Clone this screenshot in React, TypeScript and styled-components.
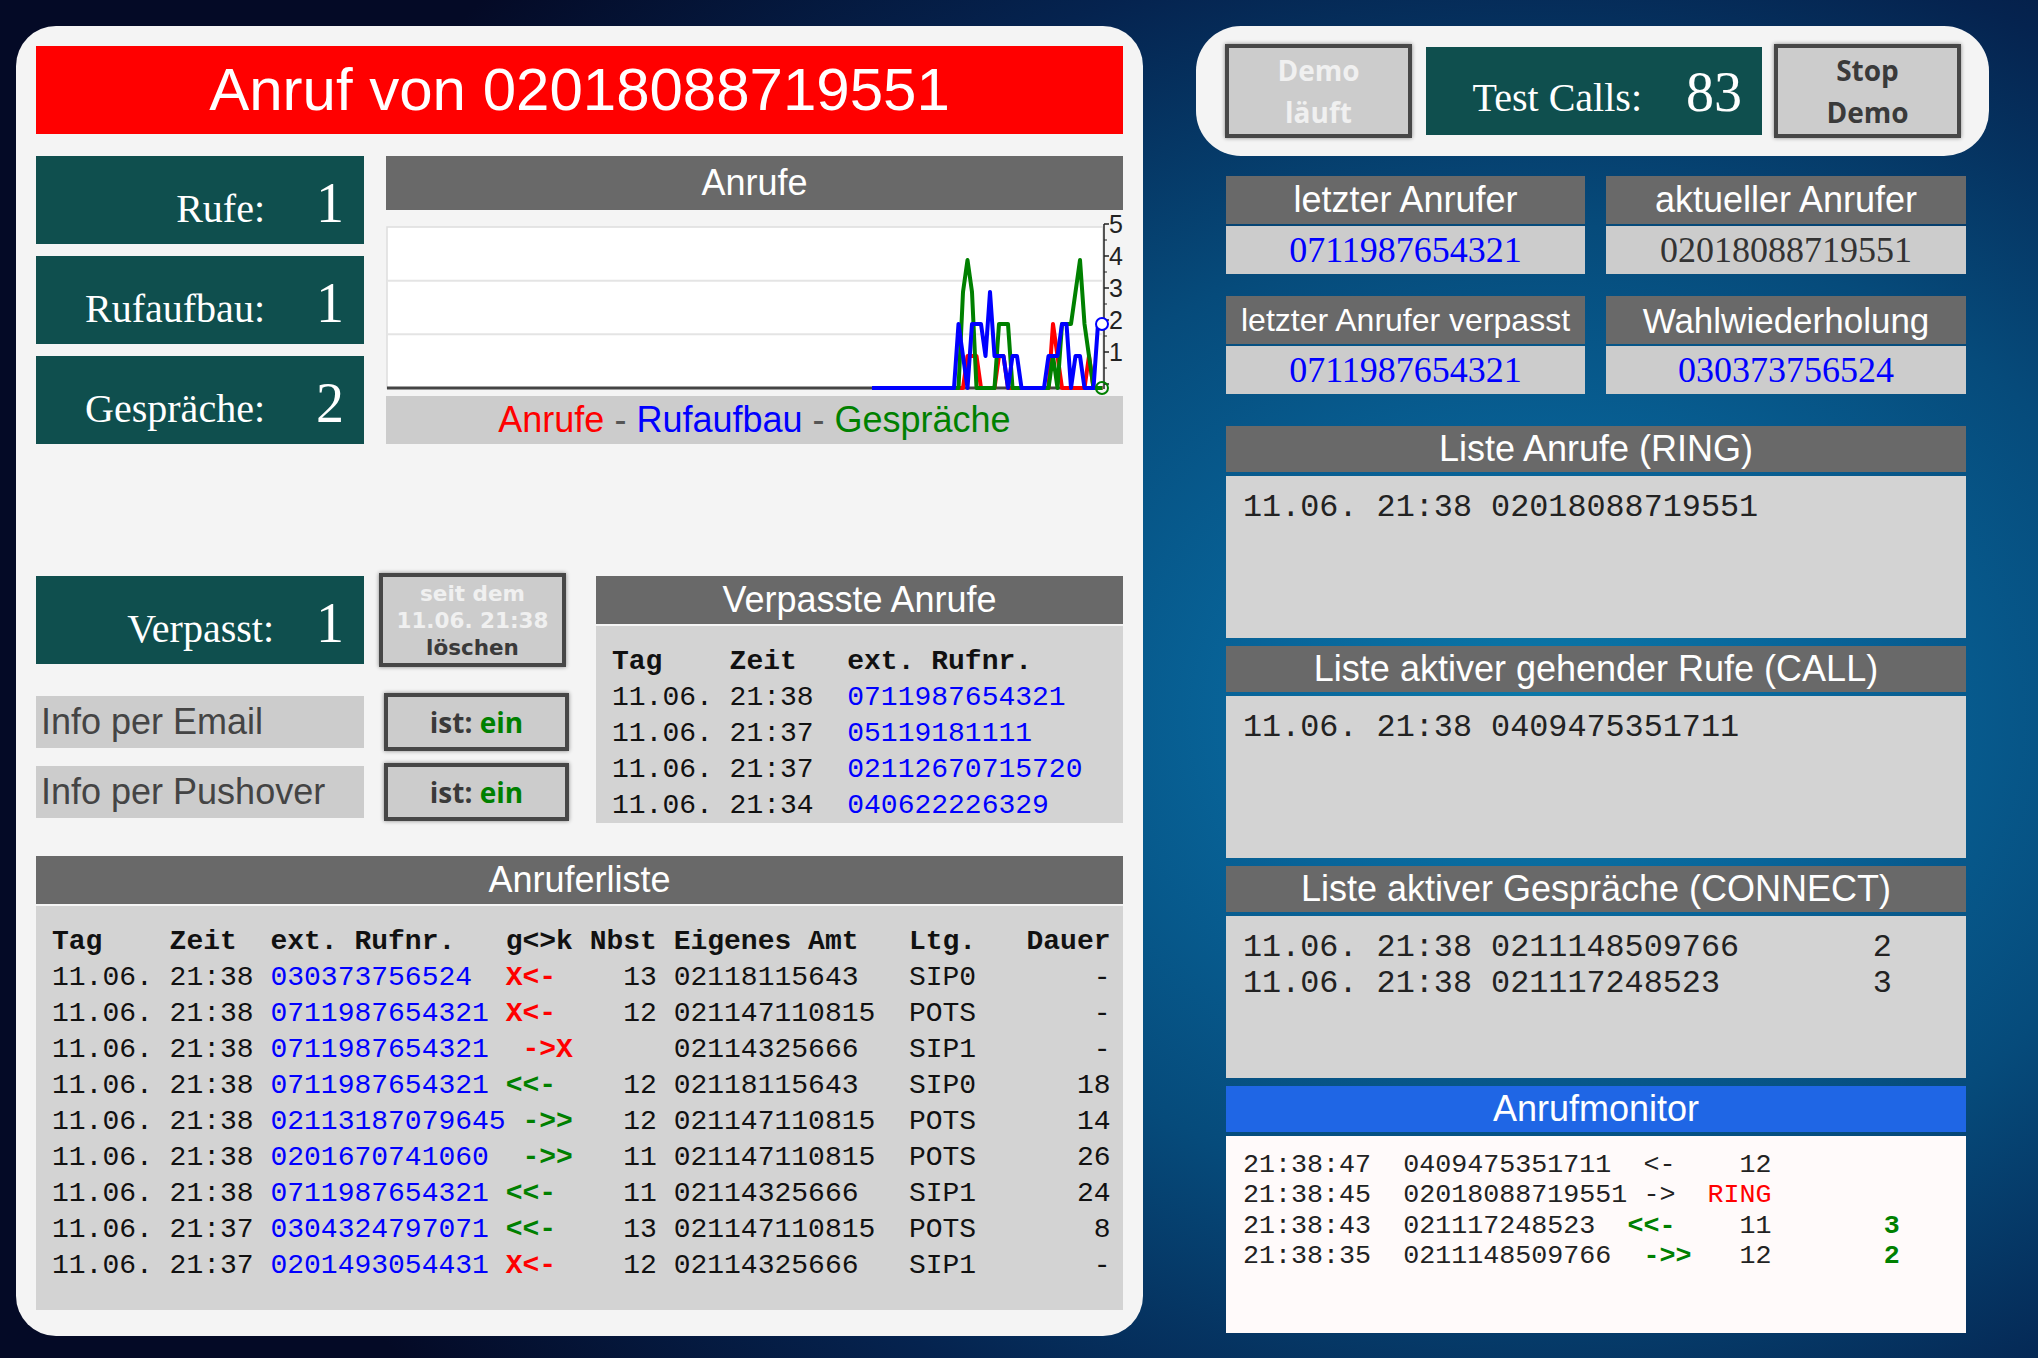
import React from 'react';
import styled, { createGlobalStyle } from 'styled-components';

const SANS = '"Liberation Sans", Arial, sans-serif';
const SERIF = '"Liberation Serif", "Times New Roman", serif';
const MONO = '"Liberation Mono", "Courier New", monospace';
const BTN = '"Open Sans", "DejaVu Sans", sans-serif';
const BTN_TIGHT = '"DejaVu Sans", Verdana, sans-serif';

const GlobalStyle = createGlobalStyle`
  html, body { margin: 0; padding: 0; }
  body {
    width: 2038px;
    height: 1358px;
    overflow: hidden;
    background: radial-gradient(ellipse 1400px 1100px at 1540px 720px, #0b7aaa 0%, #08659a 20%, #064b7b 45%, #05234f 72%, #040a26 100%);
    font-family: ${SANS};
  }
`;

const Page = styled.div`
  display: flex;
  align-items: flex-start;
  gap: 53px;
  padding: 26px 0 0 16px;
`;

const LeftPanel = styled.div`
  width: 1127px;
  box-sizing: border-box;
  padding: 20px 20px 26px;
  background: #f4f4f4;
  border-radius: 40px;
  display: flex;
  flex-direction: column;
`;

const TitleBar = styled.div`
  height: 88px;
  background: #ff0000;
  color: #fff;
  font: 60px/1 ${SANS};
  display: flex;
  align-items: center;
  justify-content: center;
`;

const TopRow = styled.div`
  margin-top: 22px;
  display: grid;
  grid-template-columns: 328px 737px;
  column-gap: 22px;
`;

const StatStack = styled.div`
  display: flex;
  flex-direction: column;
  gap: 12px;
`;

const StatBox = styled.div<{ $w?: number; $pt: number; $ml?: number }>`
  width: ${(p) => (p.$w ? `${p.$w}px` : '328px')};
  height: 88px;
  margin-left: ${(p) => p.$ml || 0}px;
  box-sizing: border-box;
  flex-shrink: 0;
  background: #0f4f4e;
  color: #fff;
  font-family: ${SERIF};
  display: flex;
  justify-content: flex-end;
  align-items: baseline;
  padding: ${(p) => p.$pt}px 20px 0 0;
`;

const StatLabel = styled.span`
  font-size: 40px;
  line-height: 1;
`;

const StatValue = styled.span<{ $w: number }>`
  font-size: 56px;
  line-height: 1;
  width: ${(p) => p.$w}px;
  text-align: right;
`;

const Column = styled.div`
  display: flex;
  flex-direction: column;
`;

const SectionHeader = styled.div<{ $h: number; $bg?: string; $fs?: number }>`
  height: ${(p) => p.$h}px;
  flex-shrink: 0;
  background: ${(p) => p.$bg || '#696969'};
  color: #fff;
  font-family: ${SANS};
  font-size: ${(p) => p.$fs || 36}px;
  line-height: 1;
  display: flex;
  align-items: center;
  justify-content: center;
  white-space: nowrap;
`;

const ChartArea = styled.div`
  height: 186px;
  svg { display: block; overflow: visible; }
`;

const Legend = styled.div`
  height: 48px;
  background: #cccccc;
  color: #555;
  font: 36px/1 ${SANS};
  display: flex;
  align-items: center;
  justify-content: center;
  white-space: pre;
`;

const LegendItem = styled.span<{ $c: string }>`
  color: ${(p) => p.$c};
`;

const MiddleRow = styled.div`
  margin-top: 132px;
  display: flex;
`;

const ControlColumn = styled.div`
  width: 560px;
  display: flex;
  flex-direction: column;
`;

const ControlRow = styled.div<{ $h: number; $mt?: number }>`
  height: ${(p) => p.$h}px;
  margin-top: ${(p) => p.$mt || 0}px;
  display: flex;
  align-items: center;
`;

const InfoBar = styled.div`
  width: 328px;
  height: 52px;
  flex-shrink: 0;
  box-sizing: border-box;
  padding-left: 5px;
  background: #cccccc;
  color: #444;
  font: 36px/1 ${SANS};
  display: flex;
  align-items: center;
`;

const ActionButton = styled.button<{ $w: number; $h: number; $ml?: number; $fs: number; $lh: number; $font?: string }>`
  width: ${(p) => p.$w}px;
  height: ${(p) => p.$h}px;
  margin-left: ${(p) => p.$ml || 0}px;
  flex-shrink: 0;
  box-sizing: border-box;
  padding: 0;
  background: #cccccc;
  border: 4px solid #474747;
  box-shadow: 0 0 4px rgba(0, 0, 0, 0.45);
  font-family: ${(p) => p.$font || BTN};
  font-weight: 700;
  font-size: ${(p) => p.$fs}px;
  line-height: ${(p) => p.$lh}px;
  color: #3a3a3a;
  display: flex;
  flex-direction: column;
  align-items: center;
  justify-content: center;
  cursor: pointer;
`;

const BtnLine = styled.span<{ $light?: boolean }>`
  display: block;
  white-space: nowrap;
  color: ${(p) => (p.$light ? '#f0f0f0' : '#3a3a3a')};
`;

const Green = styled.span`
  color: #008000;
`;

const TableSection = styled.div<{ $w?: number; $mt?: number }>`
  width: ${(p) => (p.$w ? `${p.$w}px` : 'auto')};
  margin-top: ${(p) => p.$mt || 0}px;
  display: flex;
  flex-direction: column;
  gap: 2px;
`;

const DataBody = styled.div<{ $h: number; $pad: string }>`
  height: ${(p) => p.$h}px;
  box-sizing: border-box;
  padding: ${(p) => p.$pad};
  overflow: hidden;
  background: #d3d3d3;
  color: #111;
  font-family: ${MONO};
  font-size: 28px;
  line-height: 36px;
`;

const GridRow = styled.div<{ $cols: string; $bold?: boolean }>`
  display: grid;
  grid-template-columns: ${(p) => p.$cols};
  white-space: pre;
  font-weight: ${(p) => (p.$bold ? 700 : 400)};
`;

const Cell = styled.span<{ $right?: boolean; $pl?: number }>`
  text-align: ${(p) => (p.$right ? 'right' : 'left')};
  padding-left: ${(p) => (p.$pl ? `${p.$pl}ch` : '0')};
`;

const NumCell = styled(Cell)`
  color: #0000ff;
`;

const ArrowCell = styled(Cell)<{ $c: string }>`
  color: ${(p) => p.$c};
  font-weight: 700;
`;

const RightCol = styled.div`
  width: 793px;
  display: flex;
  flex-direction: column;
`;

const Pill = styled.div`
  height: 130px;
  box-sizing: border-box;
  padding-left: 29px;
  background: #f4f4f4;
  border-radius: 45px;
  display: flex;
  align-items: center;
`;

const CardGrid = styled.div`
  margin: 20px 0 0 30px;
  width: 740px;
  display: grid;
  grid-template-columns: 359px 360px;
  column-gap: 21px;
  row-gap: 22px;
`;

const Card = styled.div`
  display: flex;
  flex-direction: column;
  gap: 2px;
`;

const CardValue = styled.div<{ $c: string }>`
  height: 48px;
  background: #cccccc;
  color: ${(p) => p.$c};
  font: 36px/1 ${SERIF};
  display: flex;
  align-items: center;
  justify-content: center;
`;

const ListSection = styled.div<{ $mt: number }>`
  margin: ${(p) => p.$mt}px 0 0 30px;
  width: 740px;
  display: flex;
  flex-direction: column;
  gap: 4px;
`;

const ListBody = styled.div`
  height: 162px;
  box-sizing: border-box;
  padding: 14px 17px;
  background: #d3d3d3;
  color: #222;
  font-family: ${MONO};
  font-size: 31.8px;
  line-height: 36px;
  white-space: pre;
`;

const MonitorBody = styled.div`
  height: 197px;
  box-sizing: border-box;
  padding: 14px 17px;
  background: #fffafa;
  color: #222;
  font-family: ${MONO};
  font-size: 26.7px;
  line-height: 30.3px;
  white-space: pre;
`;

const MonLine = styled.div``;

const Red = styled.span`
  color: #ff0000;
`;

const GreenBold = styled.span`
  color: #008000;
  font-weight: 700;
`;

/* ---------- chart ---------- */
const PX0 = 568;
const STEP = 4.5;
const yv = (v: number) => 178 - 32 * v;
const blue = [0, 2, 1, 0, 2, 2, 2, 1, 3, 1, 1, 1, 0, 1, 1, 0, 0, 0, 0, 0, 0, 1, 1, 1, 2, 2, 0, 1, 1, 0, 0, 0, 2, 2];
const green = [0, 0, 3, 4, 3, 0, 0, 0, 0, 0, 2, 2, 2, 0, 0, 0, 0, 0, 0, 0, 0, 0, 1, 0, 2, 2, 2, 3, 4, 2, 1, 0, 0, 0];
const red = [0, 0, 0, 1, 1, 1, 0, 0, 0, 0, 1, 1, 0, 0, 0, 0, 0, 0, 0, 0, 0, 0, 2, 1, 0, 0, 0, 0, 0, 0, 1, 0, 0, 0];

const seriesPath = (vals: number[], startX?: number) => {
  let d = startX !== undefined ? `M${startX},178 L${PX0},${yv(vals[0])}` : `M${PX0},${yv(vals[0])}`;
  vals.forEach((v, i) => {
    if (i > 0) d += ` L${(PX0 + i * STEP).toFixed(1)},${yv(v)}`;
  });
  return d;
};

const Chart = () => (
  <svg width="737" height="186" viewBox="0 0 737 186">
    <rect x="1" y="17" width="716" height="161" fill="#ffffff" stroke="#dddddd" strokeWidth="1.5" />
    <line x1="1" y1="70.7" x2="716" y2="70.7" stroke="#e4e4e4" strokeWidth="2" />
    <line x1="1" y1="124.3" x2="716" y2="124.3" stroke="#e4e4e4" strokeWidth="2" />
    <line x1="1" y1="178" x2="716" y2="178" stroke="#444" strokeWidth="3" />
    <line x1="718" y1="14" x2="718" y2="179" stroke="#222" strokeWidth="1.5" />
    {[0, 1, 2, 3, 4, 5].map((v) => (
      <line key={`t${v}`} x1="718" y1={yv(v) - 4} x2="723" y2={yv(v) - 4} stroke="#222" strokeWidth="1.5" />
    ))}
    {[0.5, 1.5, 2.5, 3.5, 4.5].map((v) => (
      <line key={`m${v}`} x1="718" y1={yv(v) - 4} x2="721" y2={yv(v) - 4} stroke="#222" strokeWidth="1" />
    ))}
    {[1, 2, 3, 4, 5].map((v) => (
      <text key={`l${v}`} x="723" y={yv(v) + 5} fontFamily={SANS} fontSize="25" fill="#222">
        {v}
      </text>
    ))}
    <path d={seriesPath(red)} fill="none" stroke="#ff0000" strokeWidth="4" strokeLinejoin="round" />
    <path d={seriesPath(green)} fill="none" stroke="#008000" strokeWidth="4" strokeLinejoin="round" />
    <path d={seriesPath(blue, 486)} fill="none" stroke="#0000ff" strokeWidth="4" strokeLinejoin="round" />
    <circle cx="716" cy={yv(2)} r="6" fill="#fff" stroke="#0000ff" strokeWidth="2" />
    <circle cx="716" cy="178" r="6" fill="none" stroke="#008000" strokeWidth="2" />
  </svg>
);

/* ---------- data ---------- */
type Dir = 'missIn' | 'missOut' | 'in' | 'out';
const arrowText: Record<Dir, string> = { missIn: 'X<-', missOut: ' ->X', in: '<<-', out: ' ->>' };
const arrowColor: Record<Dir, string> = { missIn: '#ff0000', missOut: '#ff0000', in: '#008000', out: '#008000' };

const calls: { day: string; time: string; nr: string; dir: Dir; nbst: string; own: string; ltg: string; dur: string }[] = [
  { day: '11.06.', time: '21:38', nr: '030373756524', dir: 'missIn', nbst: '13', own: '02118115643', ltg: 'SIP0', dur: '-' },
  { day: '11.06.', time: '21:38', nr: '0711987654321', dir: 'missIn', nbst: '12', own: '021147110815', ltg: 'POTS', dur: '-' },
  { day: '11.06.', time: '21:38', nr: '0711987654321', dir: 'missOut', nbst: '', own: '02114325666', ltg: 'SIP1', dur: '-' },
  { day: '11.06.', time: '21:38', nr: '0711987654321', dir: 'in', nbst: '12', own: '02118115643', ltg: 'SIP0', dur: '18' },
  { day: '11.06.', time: '21:38', nr: '02113187079645', dir: 'out', nbst: '12', own: '021147110815', ltg: 'POTS', dur: '14' },
  { day: '11.06.', time: '21:38', nr: '0201670741060', dir: 'out', nbst: '11', own: '021147110815', ltg: 'POTS', dur: '26' },
  { day: '11.06.', time: '21:38', nr: '0711987654321', dir: 'in', nbst: '11', own: '02114325666', ltg: 'SIP1', dur: '24' },
  { day: '11.06.', time: '21:37', nr: '0304324797071', dir: 'in', nbst: '13', own: '021147110815', ltg: 'POTS', dur: '8' },
  { day: '11.06.', time: '21:37', nr: '0201493054431', dir: 'missIn', nbst: '12', own: '02114325666', ltg: 'SIP1', dur: '-' },
];

const missed = [
  { day: '11.06.', time: '21:38', nr: '0711987654321' },
  { day: '11.06.', time: '21:37', nr: '05119181111' },
  { day: '11.06.', time: '21:37', nr: '02112670715720' },
  { day: '11.06.', time: '21:34', nr: '040622226329' },
];

const CALL_COLS = '7ch 6ch 14ch 5ch 4ch 15ch 7ch 5ch';
const MISSED_COLS = '7ch 7ch 1fr';

export default function App() {
  return (
    <>
      <GlobalStyle />
      <Page>
        <LeftPanel>
          <TitleBar>Anruf von 02018088719551</TitleBar>

          <TopRow>
            <StatStack>
              <StatBox $pt={19}>
                <StatLabel>Rufe:</StatLabel>
                <StatValue $w={79}>1</StatValue>
              </StatBox>
              <StatBox $pt={19}>
                <StatLabel>Rufaufbau:</StatLabel>
                <StatValue $w={79}>1</StatValue>
              </StatBox>
              <StatBox $pt={19}>
                <StatLabel>Gespräche:</StatLabel>
                <StatValue $w={79}>2</StatValue>
              </StatBox>
            </StatStack>
            <Column>
              <SectionHeader $h={54}>Anrufe</SectionHeader>
              <ChartArea>
                <Chart />
              </ChartArea>
              <Legend>
                <LegendItem $c="#ff0000">Anrufe</LegendItem>
                {' - '}
                <LegendItem $c="#0000ff">Rufaufbau</LegendItem>
                {' - '}
                <LegendItem $c="#008000">Gespräche</LegendItem>
              </Legend>
            </Column>
          </TopRow>

          <MiddleRow>
            <ControlColumn>
              <ControlRow $h={88}>
                <StatBox $pt={19}>
                  <StatLabel>Verpasst:</StatLabel>
                  <StatValue $w={70}>1</StatValue>
                </StatBox>
                <ActionButton $w={187} $h={94} $ml={15} $fs={21.5} $lh={27} $font={BTN_TIGHT}>
                  <BtnLine $light>seit dem</BtnLine>
                  <BtnLine $light>11.06. 21:38</BtnLine>
                  <BtnLine>löschen</BtnLine>
                </ActionButton>
              </ControlRow>
              <ControlRow $h={52} $mt={32}>
                <InfoBar>Info per Email</InfoBar>
                <ActionButton $w={185} $h={58} $ml={20} $fs={28} $lh={32}>
                  <BtnLine>
                    ist: <Green>ein</Green>
                  </BtnLine>
                </ActionButton>
              </ControlRow>
              <ControlRow $h={52} $mt={18}>
                <InfoBar>Info per Pushover</InfoBar>
                <ActionButton $w={185} $h={58} $ml={20} $fs={28} $lh={32}>
                  <BtnLine>
                    ist: <Green>ein</Green>
                  </BtnLine>
                </ActionButton>
              </ControlRow>
            </ControlColumn>

            <TableSection $w={527}>
              <SectionHeader $h={48}>Verpasste Anrufe</SectionHeader>
              <DataBody $h={197} $pad="18px 16px 0">
                <GridRow $cols={MISSED_COLS} $bold>
                  <Cell>Tag</Cell>
                  <Cell>Zeit</Cell>
                  <Cell>ext. Rufnr.</Cell>
                </GridRow>
                {missed.map((m, i) => (
                  <GridRow key={i} $cols={MISSED_COLS}>
                    <Cell>{m.day}</Cell>
                    <Cell>{m.time}</Cell>
                    <NumCell>{m.nr}</NumCell>
                  </GridRow>
                ))}
              </DataBody>
            </TableSection>
          </MiddleRow>

          <TableSection $mt={33}>
            <SectionHeader $h={48}>Anruferliste</SectionHeader>
            <DataBody $h={404} $pad="18px 16px">
              <GridRow $cols={CALL_COLS} $bold>
                <Cell>Tag</Cell>
                <Cell>Zeit</Cell>
                <Cell>ext. Rufnr.</Cell>
                <Cell>g&lt;&gt;k</Cell>
                <Cell $right>Nbst</Cell>
                <Cell $pl={1}>Eigenes Amt</Cell>
                <Cell>Ltg.</Cell>
                <Cell $right>Dauer</Cell>
              </GridRow>
              {calls.map((c, i) => (
                <GridRow key={i} $cols={CALL_COLS}>
                  <Cell>{c.day}</Cell>
                  <Cell>{c.time}</Cell>
                  <NumCell>{c.nr}</NumCell>
                  <ArrowCell $c={arrowColor[c.dir]}>{arrowText[c.dir]}</ArrowCell>
                  <Cell $right>{c.nbst}</Cell>
                  <Cell $pl={1}>{c.own}</Cell>
                  <Cell>{c.ltg}</Cell>
                  <Cell $right>{c.dur}</Cell>
                </GridRow>
              ))}
            </DataBody>
          </TableSection>
        </LeftPanel>

        <RightCol>
          <Pill>
            <ActionButton $w={187} $h={94} $fs={28} $lh={42}>
              <BtnLine $light>Demo</BtnLine>
              <BtnLine $light>läuft</BtnLine>
            </ActionButton>
            <StatBox $w={336} $pt={17} $ml={14}>
              <StatLabel>Test Calls:</StatLabel>
              <StatValue $w={100}>83</StatValue>
            </StatBox>
            <ActionButton $w={187} $h={94} $ml={12} $fs={28} $lh={42}>
              <BtnLine>Stop</BtnLine>
              <BtnLine>Demo</BtnLine>
            </ActionButton>
          </Pill>

          <CardGrid>
            <Card>
              <SectionHeader $h={48}>letzter Anrufer</SectionHeader>
              <CardValue $c="#0000ff">0711987654321</CardValue>
            </Card>
            <Card>
              <SectionHeader $h={48}>aktueller Anrufer</SectionHeader>
              <CardValue $c="#333333">02018088719551</CardValue>
            </Card>
            <Card>
              <SectionHeader $h={48} $fs={32}>
                letzter Anrufer verpasst
              </SectionHeader>
              <CardValue $c="#0000ff">0711987654321</CardValue>
            </Card>
            <Card>
              <SectionHeader $h={48} $fs={35}>
                Wahlwiederholung
              </SectionHeader>
              <CardValue $c="#0000ff">030373756524</CardValue>
            </Card>
          </CardGrid>

          <ListSection $mt={32}>
            <SectionHeader $h={46}>Liste Anrufe (RING)</SectionHeader>
            <ListBody>{'11.06. 21:38 02018088719551'}</ListBody>
          </ListSection>

          <ListSection $mt={8}>
            <SectionHeader $h={46}>Liste aktiver gehender Rufe (CALL)</SectionHeader>
            <ListBody>{'11.06. 21:38 0409475351711'}</ListBody>
          </ListSection>

          <ListSection $mt={8}>
            <SectionHeader $h={46}>Liste aktiver Gespräche (CONNECT)</SectionHeader>
            <ListBody>
              {'11.06. 21:38 0211148509766       2\n11.06. 21:38 021117248523        3'}
            </ListBody>
          </ListSection>

          <ListSection $mt={8}>
            <SectionHeader $h={46} $bg="#1f66e5">
              Anrufmonitor
            </SectionHeader>
            <MonitorBody>
              <MonLine>{'21:38:47  0409475351711  <-    12'}</MonLine>
              <MonLine>
                {'21:38:45  02018088719551 ->  '}
                <Red>RING</Red>
              </MonLine>
              <MonLine>
                {'21:38:43  021117248523  '}
                <GreenBold>{'<<-'}</GreenBold>
                {'    11       '}
                <GreenBold>3</GreenBold>
              </MonLine>
              <MonLine>
                {'21:38:35  0211148509766  '}
                <GreenBold>{'->>'}</GreenBold>
                {'   12       '}
                <GreenBold>2</GreenBold>
              </MonLine>
            </MonitorBody>
          </ListSection>
        </RightCol>
      </Page>
    </>
  );
}
